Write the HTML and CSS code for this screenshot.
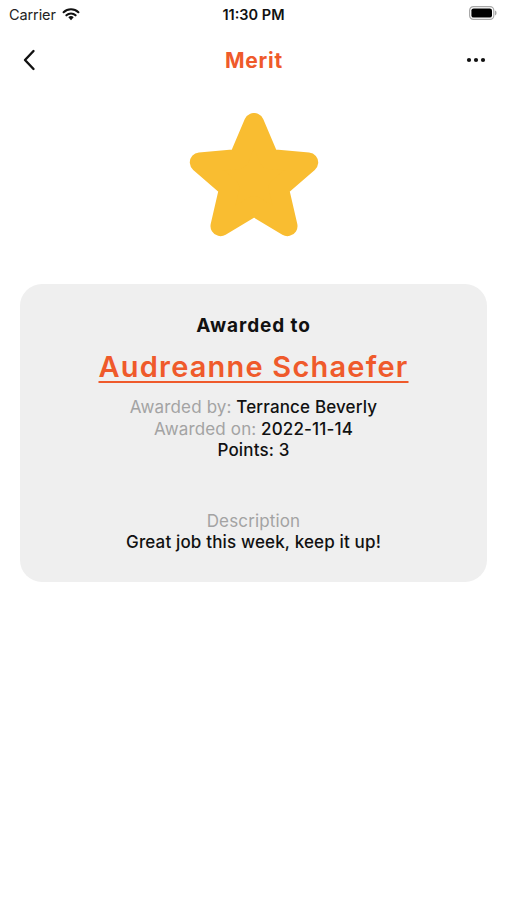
FILE: index.html
```html
<!DOCTYPE html>
<html>
<head>
<meta charset="utf-8">
<link rel="stylesheet" href="styles.css">
</head>
<body>
<div class="screen">
  <div class="status">
    <div class="status-left">
      <span class="carrier">Carrier</span>
      <svg class="wifi" width="18" height="14" viewBox="0 0 18 14">
        <path d="M9 13.2 L6.3 10.3 A3.9 3.9 0 0 1 11.7 10.3 Z" fill="#111"/>
        <path d="M4.4 8.3 A6.6 6.6 0 0 1 13.6 8.3" fill="none" stroke="#111" stroke-width="2.1" stroke-linecap="round"/>
        <path d="M1.6 5.2 A10.6 10.6 0 0 1 16.4 5.2" fill="none" stroke="#111" stroke-width="2.1" stroke-linecap="round"/>
      </svg>
    </div>
    <div class="time">11:30 PM</div>
    <div class="status-right">
      <svg width="28" height="14" viewBox="0 0 28 14">
        <rect x="0.6" y="0.6" width="24.2" height="12.8" rx="3.8" fill="none" stroke="#a8a8a8" stroke-width="1.2"/>
        <rect x="2.4" y="2.4" width="20.6" height="9.2" rx="2.2" fill="#000"/>
        <path d="M26 4.6 Q27.6 5 27.6 7 Q27.6 9 26 9.4 Z" fill="#a8a8a8"/>
      </svg>
    </div>
  </div>
  <div class="nav">
    <svg class="back" width="14" height="22" viewBox="0 0 14 22">
      <path d="M11.5 2 L3 11 L11.5 20" fill="none" stroke="#111" stroke-width="2.4" stroke-linecap="round" stroke-linejoin="round"/>
    </svg>
    <div class="title">Merit</div>
    <svg class="more" width="20" height="6" viewBox="0 0 20 6">
      <circle cx="3" cy="3" r="2.1" fill="#111"/>
      <circle cx="10" cy="3" r="2.1" fill="#111"/>
      <circle cx="17" cy="3" r="2.1" fill="#111"/>
    </svg>
  </div>
  <div class="badge">
    <svg width="140" height="134" viewBox="-70 -67 140 134">
      <polygon points="0,-57 15.28,-21.03 54.21,-17.61 24.73,8.03 33.5,46.11 0,26 -33.5,46.11 -24.73,8.03 -54.21,-17.61 -15.28,-21.03" fill="#f9bd31" stroke="#f9bd31" stroke-width="20" stroke-linejoin="round"/>
    </svg>
  </div>
  <div class="card">
    <div class="heading">Awarded to</div>
    <a class="name" href="#">Audreanne Schaefer</a>
    <div class="meta">
      <div class="row"><span class="label">Awarded by:</span> Terrance Beverly</div>
      <div class="row"><span class="label">Awarded on:</span> 2022-11-14</div>
      <div class="row">Points: 3</div>
    </div>
    <div class="desc">
      <div class="row label">Description</div>
      <div class="row">Great job this week, keep it up!</div>
    </div>
  </div>
</div>
</body>
</html>
```

FILE: styles.css
```css
html, body {
  margin: 0;
  padding: 0;
  background: #ffffff;
}
body {
  font-family: Inter, "Noto Sans", "Liberation Sans", sans-serif;
  color: #111111;
}
.screen {
  width: 507px;
  min-height: 900px;
  display: flex;
  flex-direction: column;
}
.status {
  height: 28px;
  display: grid;
  grid-template-columns: 1fr auto 1fr;
  align-items: center;
  padding: 0 9px;
}
.status-left {
  display: flex;
  align-items: center;
  gap: 6px;
}
.carrier {
  font-size: 14.5px;
  color: #222;
  letter-spacing: -0.1px;
}
.wifi {
  margin-top: -1px;
}
.time {
  font-size: 14.5px;
  font-weight: 600;
  color: #111;
}
.status-right {
  display: flex;
  justify-content: flex-end;
  padding-right: 1px;
  margin-top: -2px;
}
.nav {
  height: 64px;
  display: flex;
  align-items: center;
  justify-content: space-between;
  padding: 0 21px 0 22px;
}
.title {
  font-size: 21px;
  font-weight: 700;
  letter-spacing: 0.8px;
  color: #ef5a2b;
  margin-left: 6px;
}
.badge {
  display: flex;
  justify-content: center;
  margin-top: 21px;
  height: 134px;
}
.card {
  margin: 37px 20px 0;
  background: #efefef;
  border-radius: 22px;
  padding: 31px 16px 28px;
  display: flex;
  flex-direction: column;
  align-items: center;
  text-align: center;
}
.heading {
  font-size: 19px;
  font-weight: 700;
  line-height: 22px;
  letter-spacing: 0.9px;
}
.name {
  margin-top: 13px;
  font-size: 29px;
  font-weight: 600;
  line-height: 34px;
  letter-spacing: 1.2px;
  color: #ef5a2b;
  text-decoration: underline;
  text-decoration-thickness: 2px;
  text-underline-offset: 4px;
}
.meta {
  margin-top: 13px;
}
.row {
  font-size: 17px;
  font-weight: 500;
  line-height: 21.5px;
  letter-spacing: 0.15px;
  color: #111;
}
.label {
  font-weight: 400;
  color: #a3a3a3;
}
.desc {
  margin-top: 49px;
}
```
